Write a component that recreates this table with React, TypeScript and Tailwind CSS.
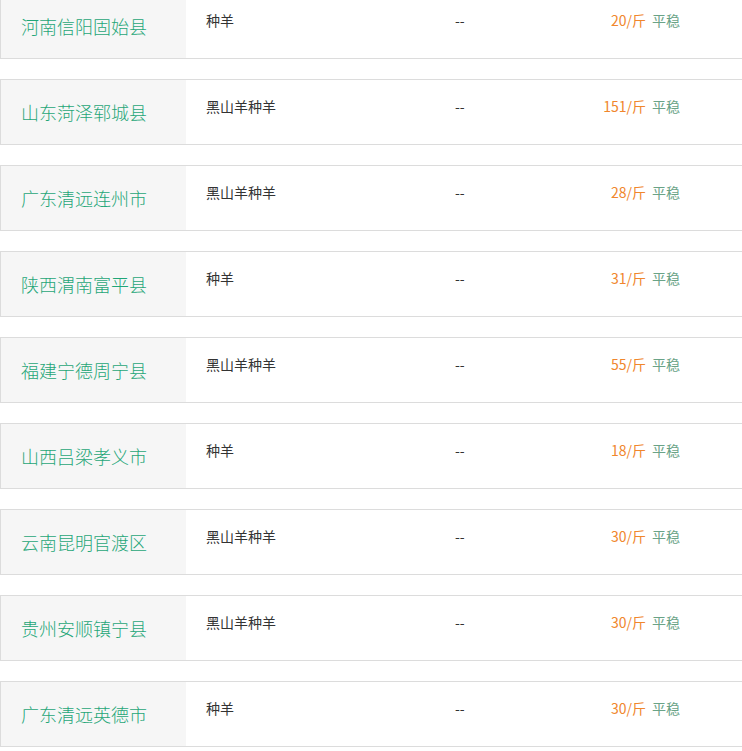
import React from "react";

const rows = [
  { place: "河南信阳固始县", kind: "种羊", price: "20" },
  { place: "山东菏泽郓城县", kind: "黑山羊种羊", price: "151" },
  { place: "广东清远连州市", kind: "黑山羊种羊", price: "28" },
  { place: "陕西渭南富平县", kind: "种羊", price: "31" },
  { place: "福建宁德周宁县", kind: "黑山羊种羊", price: "55" },
  { place: "山西吕梁孝义市", kind: "种羊", price: "18" },
  { place: "云南昆明官渡区", kind: "黑山羊种羊", price: "30" },
  { place: "贵州安顺镇宁县", kind: "黑山羊种羊", price: "30" },
  { place: "广东清远英德市", kind: "种羊", price: "30" },
];

export default function App() {
  return (
    <div
      className="w-[742px] h-[751px] overflow-hidden bg-white"
      style={{ fontFamily: '"Noto Sans CJK SC", "Noto Sans", "Liberation Sans", sans-serif' }}
    >
      <div className="-mt-[7px] flex flex-col gap-[20px]">
        {rows.map((r, i) => (
          <div
            key={i}
            className="flex h-[66px] border-t border-b border-l border-[#dcdcdc] box-border"
          >
            <div className="w-[185px] shrink-0 bg-[#f6f6f6] flex items-center pl-[20px] text-[18px] font-light text-[#1fa678] leading-none">
              {r.place}
            </div>
            <div className="w-[249px] shrink-0 pl-[20px] pt-[16px] text-[14px] leading-[20px] text-[#333333]">
              {r.kind}
            </div>
            <div className="flex-1 pl-[20px] pt-[16px] text-[14px] leading-[20px] text-[#333333]">
              --
            </div>
            <div className="pr-[62px] pt-[16px] text-[14px] leading-[20px] whitespace-nowrap">
              <span className="text-[#f0862c]">{r.price}/斤</span>
              <span className="text-[#6aa387] ml-[6px]">平稳</span>
            </div>
          </div>
        ))}
      </div>
    </div>
  );
}
